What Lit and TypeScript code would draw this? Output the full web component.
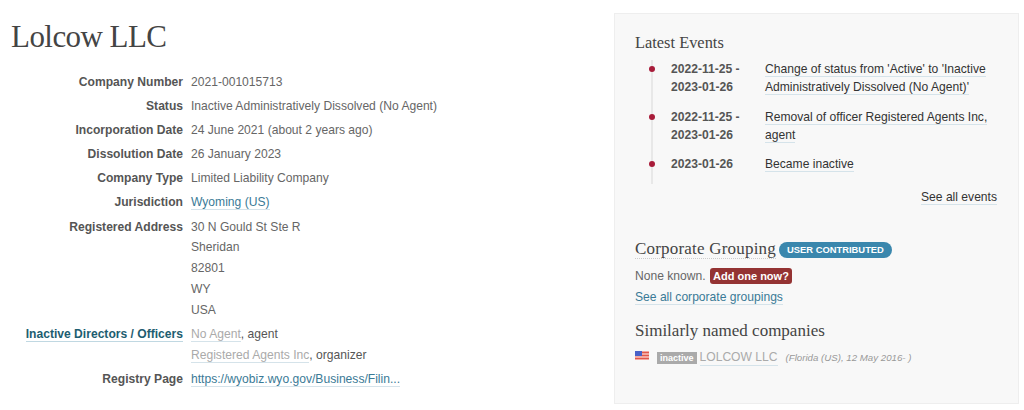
import { LitElement, html, css } from "lit";
import { customElement } from "lit/decorators.js";

@customElement("app-root")
export class AppRoot extends LitElement {
  static styles = css`
    :host { display: block; width: 1024px; height: 410px; overflow: hidden; background: #fff; font-family: "Liberation Sans", Arial, sans-serif; font-size: 12.1px; color: #666; }
    .page { display: flex; justify-content: space-between; align-items: flex-start; padding: 13px 5px 0 11px; }
    .main { width: 560px; }
    h1 { margin: 4px 0 0; font: 400 31px/40px "Liberation Serif", serif; color: #444; letter-spacing: -0.55px; }
    dl { display: grid; grid-template-columns: 172px 1fr; column-gap: 8px; margin: 13px 0 0; line-height: 24px; }
    dt { font-weight: 700; text-align: right; color: #555; }
    dd { margin: 0; }
    .sub { line-height: 21px; }
    .sub div:first-child { line-height: 24px; margin-bottom: -2.5px; }
    dt.addr, dd.addr { margin-top: 1px; }
    dd.sub.officers div:first-child { line-height: 21px; margin: 0; }
    dd.officers { padding-top: 3px; color: #555; }
    dt.off { margin-top: 3px; line-height: 21px; }
    dd.url { margin-top: 1px; }
    dt.reg { margin-top: 1px; }
    a { text-decoration: none; border-bottom: 1px solid #d5e3ea; color: #3a7a96; }
    a.muted { color: #aaa; }
    dt a { color: #1d5d70; border-bottom-color: #c0d8e2; }
    a.dark { color: #333; }
    .side { box-sizing: border-box; width: 405px; height: 391px; background: #f8f8f8; border: 1px solid #eee; padding: 19px 21px 0 20px; }
    h3 { margin: 0; font: 400 17px/20px "Liberation Serif", serif; color: #444; }
    h3.latest { font-size: 16.4px; }
    .events { margin: 7px 0 0 16px; padding: 0 0 11px; border-left: 2px solid #e8e8e8; width: 340px; }
    .event { display: grid; grid-template-columns: 94px 1fr; padding-left: 18px; line-height: 18px; margin-bottom: 11.5px; position: relative; }
    .event:last-child { margin-bottom: 0; }
    .dot { position: absolute; left: -4px; top: 6px; width: 6px; height: 6px; border-radius: 50%; background: #a81c3a; }
    .date { font-weight: 700; color: #555; }
    .more { text-align: right; margin: 4px 0 0; line-height: 18px; }
    .group { margin-top: 34px; display: flex; align-items: center; gap: 3px; }
    .group h3 { border-bottom: 1px dotted #ccc; line-height: 18px; letter-spacing: 0.2px; }
    .pill { background: #3a87ad; color: #fff; font-size: 9.4px; font-weight: 700; line-height: 16px; padding: 0 8px; border-radius: 8px; height: 16px; margin-top: 1px; }
    .none { margin-top: 8px; display: flex; align-items: center; gap: 4px; line-height: 18px; }
    .add { background: #943333; color: #fff; font-size: 11px; font-weight: 700; line-height: 16px; padding: 0 3.5px; border-radius: 3px; }
    .all { margin-top: 3px; line-height: 18px; }
    .similar { margin-top: 15px; }
    .co { margin-top: 8px; display: flex; align-items: center; line-height: 16px; }
    .flag { width: 14px; height: 9px; margin-right: 8px; margin-top: -4px; }
    .tag { background: #aaa; color: #fff; font-size: 9px; font-weight: 700; line-height: 12px; padding: 0 3px; margin-right: 3px; }
    .info { font-style: italic; font-size: 9.7px; color: #999; margin-left: 8px; }
  `;

  render() {
    return html`<div class="page">
      <div class="main">
        <h1>Lolcow LLC</h1>
        <dl>
          <dt>Company Number</dt><dd>2021-001015713</dd>
          <dt>Status</dt><dd>Inactive Administratively Dissolved (No Agent)</dd>
          <dt>Incorporation Date</dt><dd>24 June 2021 (about 2 years ago)</dd>
          <dt>Dissolution Date</dt><dd>26 January 2023</dd>
          <dt>Company Type</dt><dd>Limited Liability Company</dd>
          <dt>Jurisdiction</dt><dd><a href="#">Wyoming (US)</a></dd>
          <dt class="addr">Registered Address</dt>
          <dd class="sub addr"><div>30 N Gould St Ste R</div><div>Sheridan</div><div>82801</div><div>WY</div><div>USA</div></dd>
          <dt class="off"><a href="#">Inactive Directors / Officers</a></dt>
          <dd class="sub officers"><div><a class="muted" href="#">No Agent</a>, agent</div><div><a class="muted" href="#">Registered Agents Inc</a>, organizer</div></dd>
          <dt class="reg">Registry Page</dt><dd class="url"><a href="#">https://wyobiz.wyo.gov/Business/Filin...</a></dd>
        </dl>
      </div>
      <aside class="side">
        <h3 class="latest">Latest Events</h3>
        <div class="events">
          <div class="event"><span class="dot"></span><span class="date">2022-11-25 -<br />2023-01-26</span><span><a class="dark" href="#">Change of status from 'Active' to 'Inactive Administratively Dissolved (No Agent)'</a></span></div>
          <div class="event"><span class="dot"></span><span class="date">2022-11-25 -<br />2023-01-26</span><span><a class="dark" href="#">Removal of officer Registered Agents Inc, agent</a></span></div>
          <div class="event"><span class="dot"></span><span class="date">2023-01-26</span><span><a class="dark" href="#">Became inactive</a></span></div>
        </div>
        <div class="more"><a class="dark" href="#">See all events</a></div>
        <div class="group"><h3>Corporate Grouping</h3><span class="pill">USER CONTRIBUTED</span></div>
        <div class="none"><span>None known.</span><span class="add">Add one now?</span></div>
        <div class="all"><a href="#">See all corporate groupings</a></div>
        <h3 class="similar">Similarly named companies</h3>
        <div class="co">
          <svg class="flag" viewBox="0 0 14 9" aria-hidden="true">
            <rect width="14" height="9" fill="#f4a8a0"/>
            <path d="M0 1.5h14M0 4.5h14M0 7.5h14" stroke="#e0584c" stroke-width="1"/>
            <rect width="7" height="5" fill="#4a62c8"/>
          </svg>
          <span class="tag">inactive</span><a class="muted" href="#">LOLCOW LLC</a><span class="info">(Florida (US), 12 May 2016- )</span>
        </div>
      </aside>
    </div>`;
  }
}
